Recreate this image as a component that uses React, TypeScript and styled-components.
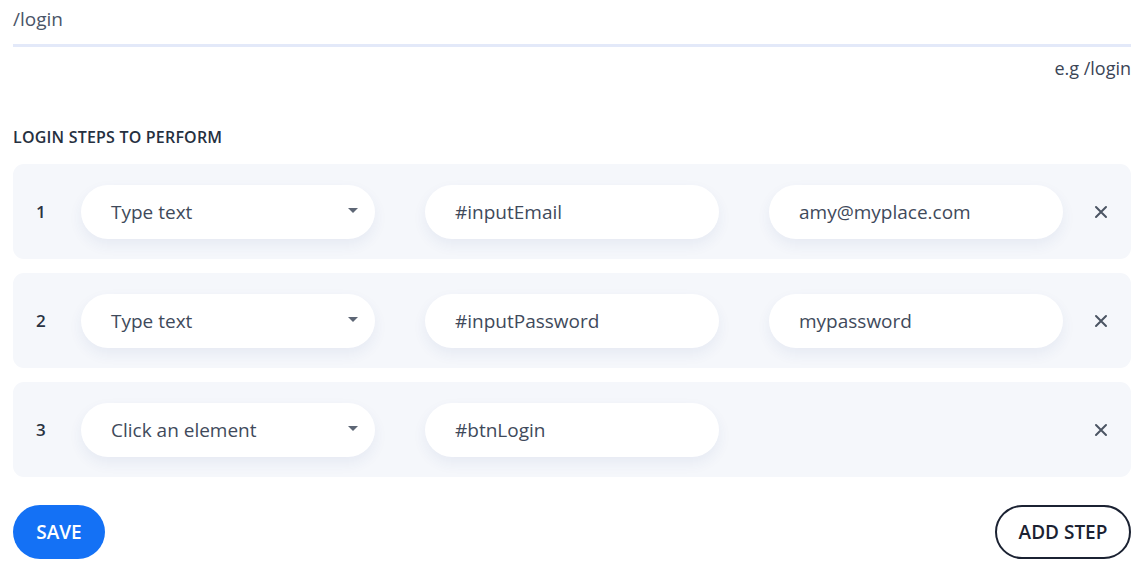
import React from "react";
import styled, { createGlobalStyle } from "styled-components";

const Global = createGlobalStyle`
  html, body { margin: 0; padding: 0; background: #ffffff; }
  body { font-family: "Open Sans", "Noto Sans", sans-serif; }
  * { box-sizing: border-box; }
`;

const Page = styled.div`
  width: 1146px;
  padding: 0 15px 0 13px;
`;

const PathInput = styled.div`
  height: 47px;
  line-height: 38px;
  font-size: 19px;
  color: #4a5568;
  border-bottom: 3px solid #e3e9f9;
`;

const Hint = styled.div`
  margin-top: 9px;
  text-align: right;
  font-size: 18px;
  line-height: 24px;
  color: #3b4556;
`;

const Heading = styled.h3`
  margin: 47px 0 17px;
  font-size: 16px;
  line-height: 20px;
  font-weight: 600;
  letter-spacing: 0.2px;
  color: #263040;
  text-transform: uppercase;
`;

const Steps = styled.div`
  display: flex;
  flex-direction: column;
  gap: 14px;
`;

const Row = styled.div`
  display: flex;
  align-items: center;
  height: 95px;
  padding-left: 23px;
  background: #f5f7fb;
  border-radius: 11px;
`;

const Num = styled.div`
  width: 45px;
  font-size: 17px;
  font-weight: 600;
  color: #2a3342;
`;

const Fields = styled.div`
  display: grid;
  grid-template-columns: 294px 294px 294px;
  column-gap: 50px;
`;

const Pill = styled.div<{ $select?: boolean }>`
  position: relative;
  height: 54px;
  border-radius: 27px;
  background: #ffffff;
  box-shadow: 0 6px 14px rgba(40, 70, 140, 0.07);
  padding: 0 30px;
  display: flex;
  align-items: center;
  font-size: 19px;
  color: #3f4a5b;
`;

const Caret = styled.span`
  position: absolute;
  right: 17px;
  top: 23px;
  width: 0;
  height: 0;
  border-left: 5px solid transparent;
  border-right: 5px solid transparent;
  border-top: 5px solid #5d6675;
`;

const Close = styled.button`
  margin-left: auto;
  width: 60px;
  height: 40px;
  border: none;
  background: transparent;
  display: flex;
  align-items: center;
  justify-content: center;
  padding: 0;
  cursor: pointer;
`;

const Footer = styled.div`
  margin-top: 28px;
  display: flex;
  justify-content: space-between;
  align-items: center;
`;

const SaveButton = styled.button`
  height: 54px;
  width: 92px;
  border-radius: 27px;
  border: none;
  background: #1471f5;
  color: #ffffff;
  font-family: inherit;
  font-size: 19px;
  font-weight: 600;
`;

const AddButton = styled.button`
  height: 54px;
  width: 136px;
  border-radius: 27px;
  border: 2px solid #1b2232;
  background: #ffffff;
  color: #1b2232;
  font-family: inherit;
  font-size: 19px;
  font-weight: 600;
`;

const XIcon = () => (
  <svg width="14" height="14" viewBox="0 0 14 14">
    <path d="M2 2 L12 12 M12 2 L2 12" stroke="#4b5563" strokeWidth="2" strokeLinecap="round" />
  </svg>
);

type Step = { action: string; selector: string; value?: string };

const steps: Step[] = [
  { action: "Type text", selector: "#inputEmail", value: "amy@myplace.com" },
  { action: "Type text", selector: "#inputPassword", value: "mypassword" },
  { action: "Click an element", selector: "#btnLogin" },
];

export default function App() {
  return (
    <Page>
      <Global />
      <PathInput>/login</PathInput>
      <Hint>e.g /login</Hint>
      <Heading>Login steps to perform</Heading>
      <Steps>
        {steps.map((s, i) => (
          <Row key={i}>
            <Num>{i + 1}</Num>
            <Fields>
              <Pill $select>
                {s.action}
                <Caret />
              </Pill>
              <Pill>{s.selector}</Pill>
              {s.value ? <Pill>{s.value}</Pill> : <div />}
            </Fields>
            <Close aria-label="remove">
              <XIcon />
            </Close>
          </Row>
        ))}
      </Steps>
      <Footer>
        <SaveButton>SAVE</SaveButton>
        <AddButton>ADD STEP</AddButton>
      </Footer>
    </Page>
  );
}
